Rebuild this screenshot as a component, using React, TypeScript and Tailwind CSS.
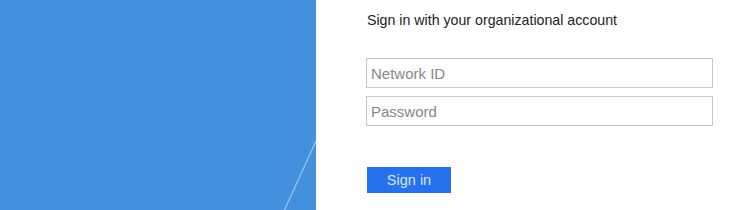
import React from "react";

export default function App() {
  return (
    <div className="flex w-[748px] h-[210px] overflow-hidden bg-white" style={{ fontFamily: '"Liberation Sans", Arial, sans-serif' }}>
      <div className="relative w-[316px] h-[210px] shrink-0 bg-[#4390dc]">
        <svg className="absolute inset-0" width="316" height="210" viewBox="0 0 316 210">
          <line x1="316" y1="141" x2="284" y2="211" stroke="#9cc6ef" strokeWidth="1.2" />
        </svg>
      </div>
      <div className="flex flex-col pl-[50px] pt-[11px]">
        <div className="text-[14.2px] leading-[18px] text-[#222] pl-[1px]">Sign in with your organizational account</div>
        <div className="mt-[29px] flex flex-col gap-[8px]">
          <input
            className="w-[347px] h-[30px] border border-[#c8c8c8] px-[4px] text-[15px] text-[#222] placeholder:text-[#888] outline-none bg-white"
            placeholder="Network ID"
          />
          <input
            type="password"
            className="w-[347px] h-[30px] border border-[#c8c8c8] px-[4px] text-[15px] text-[#222] placeholder:text-[#888] outline-none bg-white"
            placeholder="Password"
          />
        </div>
        <button className="mt-[41px] ml-[1px] w-[84px] h-[26px] bg-[#2672ec] text-[#d6e4fb] text-[14.5px] leading-[26px] text-center">
          Sign in
        </button>
      </div>
    </div>
  );
}
